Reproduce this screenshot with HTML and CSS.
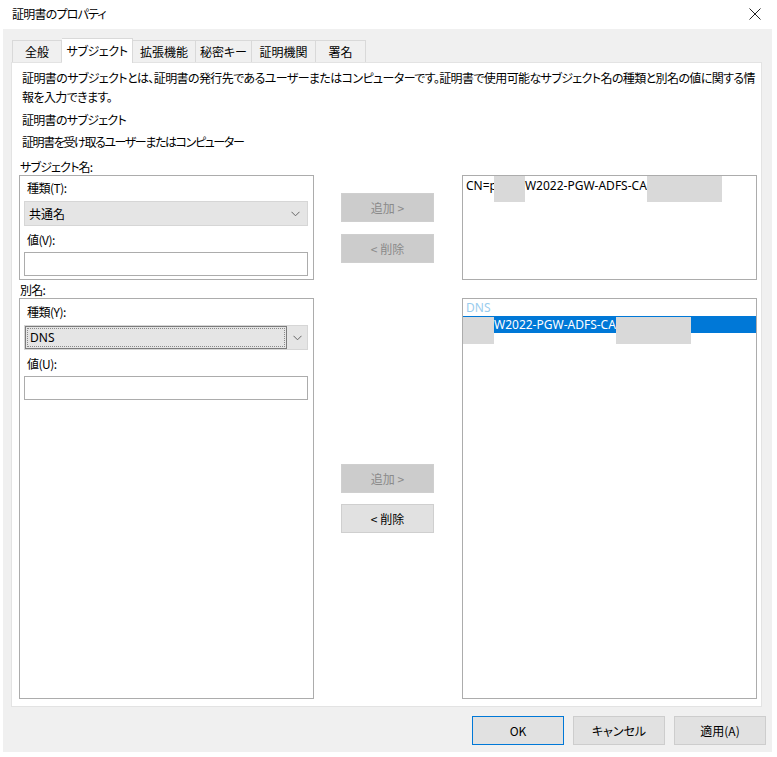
FILE: index.html
```html
<!DOCTYPE html>
<html lang="ja">
<head>
<meta charset="utf-8">
<title>証明書のプロパティ</title>
<link rel="stylesheet" href="styles.css">
</head>
<body>
<div class="titlebar">
  <span class="title">証明書のプロパティ</span>
  <svg class="close" width="12" height="12" viewBox="0 0 12 12"><path d="M0.5 0.5 L11.5 11.5 M11.5 0.5 L0.5 11.5" stroke="#222" stroke-width="1" fill="none"/></svg>
</div>
<div class="window">
  <div class="tabs">
    <div class="tab w50">全般</div>
    <div class="tab sel w71">サブジェクト</div>
    <div class="tab w63">拡張機能</div>
    <div class="tab w56">秘密キー</div>
    <div class="tab w64">証明機関</div>
    <div class="tab w50">署名</div>
  </div>
  <div class="panel">
    <p class="desc">証明書のサブジェクトとは、証明書の発行先であるユーザーまたはコンピューターです。証明書で使用可能なサブジェクト名の種類と別名の値に関する情<br>報を入力できます。</p>
    <p class="line l1">証明書のサブジェクト</p>
    <p class="line l2">証明書を受け取るユーザーまたはコンピューター</p>
    <div class="grid">
      <div class="lbl">サブジェクト名:</div><div></div><div></div>

      <div class="group g1">
        <div class="glbl">種類(T):</div>
        <div class="combo">
          <span class="ctext">共通名</span>
          <svg class="chev" width="9" height="6" viewBox="0 0 9 6"><path d="M0.5 0.8 L4.5 4.8 L8.5 0.8" stroke="#666" stroke-width="1" fill="none"/></svg>
        </div>
        <div class="glbl gap">値(V):</div>
        <div class="input"></div>
      </div>
      <div class="btns b1">
        <div class="btn dis">追加 &gt;</div>
        <div class="btn dis second">&lt; 削除</div>
      </div>
      <div class="list">
        <div class="row1">CN=p<span class="redact r1"></span>W2022-PGW-ADFS-CA<span class="redact r2"></span></div>
      </div>

      <div class="lbl lbl2">別名:</div><div></div><div></div>

      <div class="group g2">
        <div class="glbl">種類(Y):</div>
        <div class="combo focus">
          <div class="field"><span class="focusbox">DNS</span></div>
          <div class="arrow"><svg class="chev" width="9" height="6" viewBox="0 0 9 6"><path d="M0.5 0.8 L4.5 4.8 L8.5 0.8" stroke="#666" stroke-width="1" fill="none"/></svg></div>
        </div>
        <div class="glbl gap">値(U):</div>
        <div class="input"></div>
      </div>
      <div class="btns b2">
        <div class="btn dis">追加 &gt;</div>
        <div class="btn en second2">&lt; 削除</div>
      </div>
      <div class="list">
        <div class="ghead">DNS</div>
        <div class="selrow"><span class="redact r3"></span>W2022-PGW-ADFS-CA<span class="redact r4"></span></div>
      </div>
    </div>
  </div>
  <div class="footer">
    <div class="fbtn ok">OK</div>
    <div class="fbtn">キャンセル</div>
    <div class="fbtn">適用(A)</div>
  </div>
</div>
</body>
</html>
```
FILE: styles.css
```css
* { box-sizing: border-box; }
html, body { margin: 0; padding: 0; background: #fff; }
body {
  width: 777px;
  height: 757px;
  overflow: hidden;
  font-family: "Noto Sans CJK JP", sans-serif;
  font-size: 12px;
  color: #000;
  font-feature-settings: "palt";
}
p { margin: 0; }

.titlebar {
  height: 29px;
  display: flex;
  align-items: center;
  justify-content: space-between;
  padding: 0 16px 1px 12px;
}
.title { font-size: 12px; line-height: 16px; letter-spacing: -0.8px; }
.close { display: block; }

.window {
  margin: 0 5px 0 3px;
  height: 723px;
  background: #f0f0f0;
}

.tabs {
  height: 33px;
  padding: 9px 0 0 9px;
  display: flex;
  align-items: flex-end;
}
.tab {
  height: 22px;
  line-height: 21px;
  text-align: center;
  border: 1px solid #d9d9d9;
  border-bottom: none;
  border-left: none;
  background: #f0f0f0;
  white-space: nowrap;
}
.tab:first-child { border-left: 1px solid #d9d9d9; }
.tab.sel {
  height: 25px;
  line-height: 23px;
  background: #fff;
  border-color: #d9d9d9;
  position: relative;
  margin-bottom: -1px;
  z-index: 1;
  letter-spacing: -0.4px;
}
.w50 { width: 50px; }
.w71 { width: 71px; }
.w63 { width: 63px; }
.w56 { width: 56px; }
.w64 { width: 64px; }

.panel {
  margin: 0 10px 0 8px;
  height: 645px;
  background: #fff;
  border: 1px solid #e3e3e3;
}
.desc {
  margin-top: 5px;
  padding-left: 10px;
  line-height: 19px;
  white-space: nowrap;
  letter-spacing: -0.6px;
}
.line { padding-left: 10px; line-height: 19px; }
.l1 { margin-top: 4px; letter-spacing: -0.7px; }
.l2 { margin-top: 3px; letter-spacing: -1.4px; }

.grid {
  margin: 7px 0 0 7px;
  display: grid;
  grid-template-columns: 295px 148px 295px;
  grid-template-rows: 17px 105px 18px 401px;
}
.lbl { line-height: 17px; padding-left: 1px; letter-spacing: -0.8px; }
.lbl2 { line-height: 20px; }

.group {
  border: 1px solid #acacac;
  padding: 4px 5px 0 4px;
}
.g2 { padding-top: 5px; }
.glbl { line-height: 16px; padding-left: 3px; letter-spacing: -0.5px; }
.glbl.gap { margin-top: 6px; }

.combo {
  margin-top: 5px;
  height: 25px;
  background: #e5e5e5;
  border: 1px solid #d6d6d6;
  display: flex;
  align-items: center;
  justify-content: space-between;
  padding: 0 7px 0 4px;
}
.ctext { line-height: 20px; }
.chev { display: block; }

.combo.focus { padding: 0; align-items: stretch; }
.field {
  flex: 1;
  border: 1px solid #7c7c7c;
  padding: 1px;
}
.focusbox {
  display: block;
  height: 100%;
  border: 1px dotted #8a8a8a;
  line-height: 17px;
  padding-left: 2px;
  font-family: "Noto Sans", "Noto Sans CJK JP", sans-serif;
}
.arrow {
  width: 20px;
  display: flex;
  align-items: center;
  justify-content: center;
}

.input {
  margin-top: 4px;
  height: 24px;
  background: #fff;
  border: 1px solid #acacac;
}

.btns { padding-left: 27px; }
.b1 { padding-top: 18px; }
.b2 { padding-top: 166px; }
.btn {
  width: 93px;
  height: 29px;
  line-height: 27px;
  text-align: center;
  border: 1px solid #c4c4c4;
}
.btn.dis { background: #cccccc; color: #8a8a8a; border-color: #cfcfcf; }
.btn.en { background: #e1e1e1; color: #000; border-color: #cfcfcf; }
.second { margin-top: 12px; }
.second2 { margin-top: 11px; }

.list {
  border: 1px solid #acacac;
  background: #fff;
  font-family: "Noto Sans", "Noto Sans CJK JP", sans-serif;
  font-size: 12px;
}
.row1 {
  padding-left: 3px;
  line-height: 20px;
  white-space: nowrap;
}
.redact {
  display: inline-block;
  background: #d9d9d9;
  vertical-align: top;
}
.r1 { width: 31px; height: 26px; margin-left: -3px; }
.r2 { width: 75px; height: 26px; }
.ghead {
  padding-left: 3px;
  line-height: 17px;
  color: #99ccee;
}
.selrow {
  height: 17px;
  line-height: 17px;
  background: #0078d7;
  color: #fff;
  white-space: nowrap;
}
.r3 { width: 31px; height: 27px; margin-top: 1px; }
.r4 { width: 75px; height: 27px; margin-top: 1px; }

.footer {
  margin-top: 9px;
  display: flex;
  justify-content: flex-end;
  gap: 9px;
  padding-right: 6px;
}
.fbtn {
  width: 92px;
  height: 29px;
  line-height: 27px;
  text-align: center;
  background: #e1e1e1;
  border: 1px solid #cdcdcd;
}
.fbtn.ok { border-color: #0078d7; }
```
